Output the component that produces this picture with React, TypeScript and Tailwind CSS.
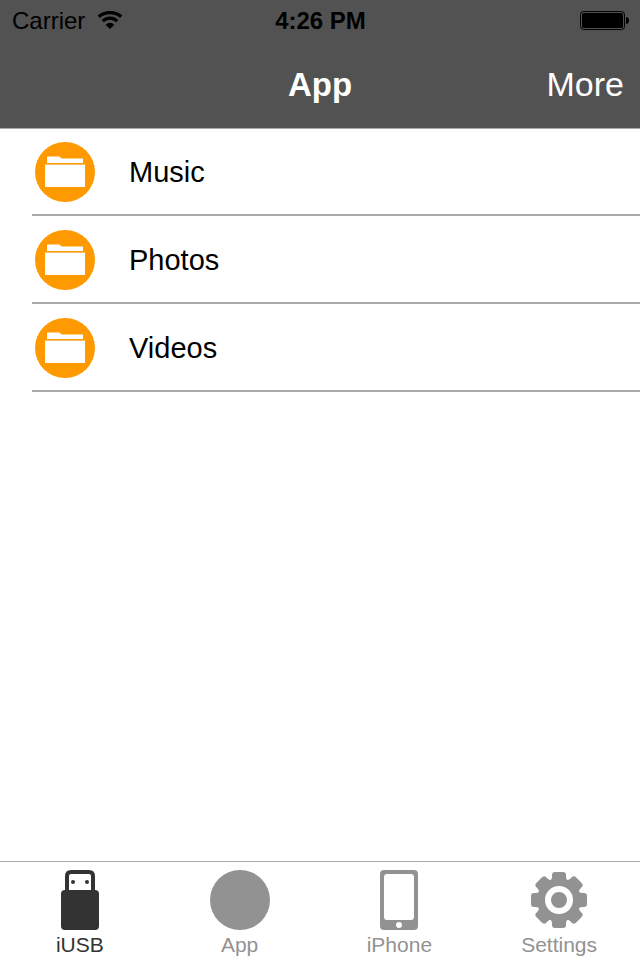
import type { ReactNode } from "react";

const folders = ["Music", "Photos", "Videos"];

function WifiIcon() {
  return (
    <svg width="26" height="18" viewBox="0 0 26 18" fill="none" stroke="#000" aria-hidden="true">
      <path d="M1.7 5.6C8 .2 18 .2 24.3 5.6" strokeWidth="3.4" />
      <path d="M5.7 10.1C10 6.200 16 6.200 20.3 10.1" strokeWidth="3.2" />
      <path d="M8.6 13.8Q13 9.6 17.4 13.8L13 18Z" fill="#000" stroke="none" />
    </svg>
  );
}

function BatteryIcon() {
  return (
    <svg width="49" height="19" viewBox="0 0 49 19" aria-hidden="true">
      <rect x="0.5" y="0.5" width="44" height="18" rx="3" fill="none" stroke="#000" />
      <rect x="2" y="2" width="41" height="15" rx="1.5" fill="#000" />
      <path d="M46 6C50 6 50 13 46 13Z" fill="#000" />
    </svg>
  );
}

function FolderIcon() {
  return (
    <svg className="shrink-0" width="60" height="60" viewBox="0 0 60 60" aria-hidden="true">
      <circle cx="30" cy="30" r="30" fill="#ff9900" />
      <path d="M12 15q0-.5.5-.5H24c1.5 0 1.5 2 3 2h21V21H12Z" fill="#fff" />
      <rect x="10" y="22.600" width="40" height="22.400" fill="#fff" />
    </svg>
  );
}

function UsbIcon() {
  return (
    <svg width="38" height="60" viewBox="0 0 38 60" aria-hidden="true">
      <path d="M6 22V6Q6 2 10 2H28Q32 2 32 6V22" fill="#fff" stroke="#333" strokeWidth="4" />
      <rect x="0" y="20" width="38" height="40" rx="4" fill="#333" />
      <circle cx="12" cy="12" r="2" fill="#333" />
      <circle cx="26" cy="12" r="2" fill="#333" />
    </svg>
  );
}

function CircleIcon() {
  return (
    <svg width="60" height="60" viewBox="0 0 60 60" aria-hidden="true">
      <circle cx="30" cy="30" r="30" fill="#929292" />
    </svg>
  );
}

function PhoneIcon() {
  return (
    <svg width="38" height="60" viewBox="0 0 38 60" aria-hidden="true">
      <rect width="38" height="60" rx="4" fill="#929292" />
      <rect x="4" y="4" width="30" height="46" rx="3" fill="#fff" />
      <circle cx="19" cy="55" r="3" fill="#fff" />
    </svg>
  );
}

function GearIcon() {
  return (
    <svg width="60" height="60" viewBox="-30 -30 60 60" fill="#929292" aria-hidden="true">
      <circle r="21.5" />
      {[0, 45, 90, 135, 180, 225, 270, 315].map((angle) => (
        <path key={angle} d="M-9-19Q-7-21-7-23V-25Q-7-28-4-28H4Q7-28 7-25V-23Q7-21 9-19Z" transform={`rotate(${angle})`} />
      ))}
      <circle r="11" fill="none" stroke="#fff" strokeWidth="6" />
    </svg>
  );
}

const tabs: { label: string; icon: ReactNode; active?: boolean }[] = [
  { label: "iUSB", icon: <UsbIcon />, active: true },
  { label: "App", icon: <CircleIcon /> },
  { label: "iPhone", icon: <PhoneIcon /> },
  { label: "Settings", icon: <GearIcon /> },
];

export default function App() {
  return (
    <div className="flex min-h-screen flex-col bg-white font-['Liberation_Sans',Arial,sans-serif] text-black">
      <header className="bg-[#525252] shadow-[0_1px_0_#a8a8a8]">
        <div className="grid h-10 grid-cols-3 items-start pr-[11px] pl-3 text-[24px] leading-[42px]">
          <div className="flex items-start gap-3">
            <span>Carrier</span>
            <span className="pt-[11px]">
              <WifiIcon />
            </span>
          </div>
          <span className="text-center font-bold">4:26 PM</span>
          <div className="flex justify-end pt-[11px]">
            <BatteryIcon />
          </div>
        </div>
        <div className="grid h-22 grid-cols-3 items-start px-4 leading-22 text-white">
          <h1 className="col-start-2 text-center text-[33px] leading-[90px] font-bold">App</h1>
          <button type="button" className="justify-self-end text-[34px] leading-22">
            More
          </button>
        </div>
      </header>

      <main className="flex-1">
        <ul className="pl-8">
          {folders.map((name) => (
            <li key={name} className="border-b-2 border-[#aaaaaa]">
              <button type="button" className="flex w-full items-center gap-[34px] pt-3.5 pb-3 pl-[3px] text-left text-[29px] leading-[60px]">
                <FolderIcon />
                {name}
              </button>
            </li>
          ))}
        </ul>
      </main>

      <nav className="grid grid-cols-4 border-t border-[#aaaaaa] pt-2 pr-px">
        {tabs.map((tab) => (
          <button
            key={tab.label}
            type="button"
            aria-current={tab.active ? "page" : undefined}
            className={`flex flex-col items-center text-[21px] leading-[30px] ${tab.active ? "text-[#333333]" : "text-[#929292]"}`}
          >
            {tab.icon}
            {tab.label}
          </button>
        ))}
      </nav>
    </div>
  );
}
